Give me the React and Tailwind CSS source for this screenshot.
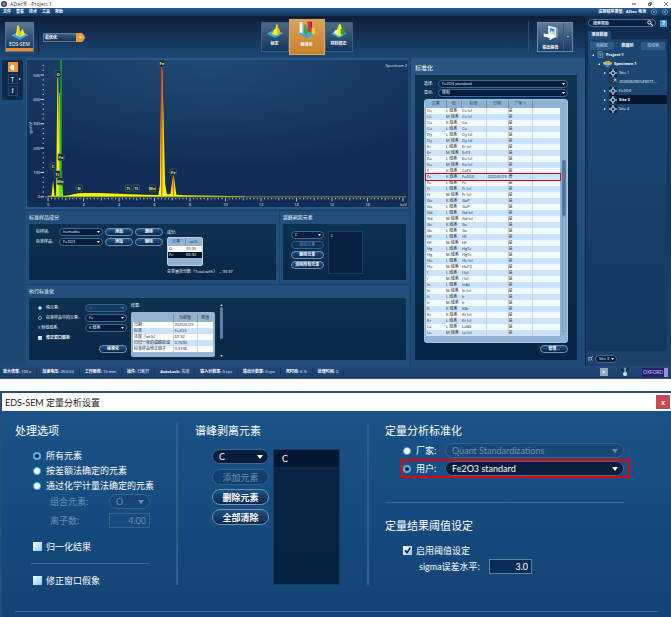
import React, { useId, useState } from 'react';
import clsx from 'clsx';

const menuItems = ['文件', '查看', '技术', '工具', '帮助'];

const standards = [
  ['Cs', 'L', 'Cs (v)'], ['Cs', 'M', 'Cs (v)'], ['Cu', 'K', 'Cu'], ['Cu', 'L', 'Cu'],
  ['Dy', 'L', 'Dy (v)'], ['Dy', 'M', 'Dy (v)'], ['Er', 'L', 'Er (v)'], ['Er', 'M', 'ErF3'],
  ['Eu', 'L', 'Eu (v)'], ['Eu', 'M', 'Eu (v)'], ['F', 'K', 'CaF2'], ['Fe', 'K', 'Fe2O3', '2020/6/29', '否'],
  ['Fe', 'L', 'Fe'], ['Fr', 'L', 'Fr (v)'], ['Fr', 'M', 'Fr (v)'], ['Ga', 'K', 'GaP'],
  ['Ga', 'L', 'GaP'], ['Gd', 'L', 'Gd (v)'], ['Gd', 'M', 'Gd (v)'], ['Ge', 'K', 'Ge'],
  ['Ge', 'L', 'Ge'], ['Hf', 'L', 'Hf'], ['Hf', 'M', 'Hf'], ['Hg', 'L', 'HgTe'],
  ['Hg', 'M', 'HgTe'], ['Ho', 'L', 'Ho (v)'], ['Ho', 'M', 'HoF3'], ['I', 'L', 'I (v)'],
  ['I', 'M', 'I (v)'], ['In', 'L', 'InAs'], ['In', 'M', 'In (v)'], ['Ir', 'L', 'Ir'],
  ['Ir', 'M', 'Ir'], ['K', 'K', 'KBr'], ['Kr', 'K', 'Kr (v)'], ['Kr', 'L', 'Kr (v)'],
  ['La', 'L', 'LaB6'], ['La', 'M', 'La (v)'],
];

const results = [
  ['日期', '2020/6/29'],
  ['标准', 'Fe2O3'],
  ['浓度（wt%）', '69.92'],
  ['已归一化的谱峰区域', '0.7690'],
  ['标准样品修正因子', '0.9336'],
];

const statusItems = [
  ['放大倍率', '100 x'],
  ['加速电压', '20.0 kV'],
  ['工作距离', '15 mm'],
  ['插件', '已断开'],
  ['AutoLock', '关闭'],
  ['输入计数率', '0 cps'],
  ['输出计数率', '0 cps'],
  ['死时间', '0 %'],
  ['处理时间', '0'],
];

const treeItems = [
  { name: 'Project 1', level: 0, icon: 'project', open: true, bold: true },
  { name: 'Specimen 1', level: 1, icon: 'specimen', open: true, bold: true },
  { name: 'Site 1', level: 2, icon: 'site' },
  { name: '202006290149077...', level: 2, icon: 'image' },
  { name: 'Fe2O3', level: 2, icon: 'site' },
  { name: 'Site 3', level: 2, icon: 'site', selected: true },
  { name: 'Site 4', level: 2, icon: 'site' },
];

const indents = ['pl-1', 'pl-[10px]', 'pl-4'];

/* ---------- shared controls ---------- */

const Select = ({ id, label, value, large, disabled, className }) => (
  <div className={clsx('relative', className)}>
    <select
      id={id}
      aria-label={label}
      defaultValue={value}
      disabled={disabled}
      className={clsx(
        'block w-full appearance-none rounded-full border py-0 outline-none',
        large ? 'h-[15px] pl-1.5 text-[9px] leading-[13px]' : 'h-2 pl-[3px] text-[4px] leading-[6px]',
        disabled
          ? 'border-[#37628b] bg-[#17436f]/60 text-[#6f90b1]'
          : 'border-[#3c6a94] bg-[#061d3b] text-white'
      )}
    >
      <option>{value}</option>
    </select>
    <svg
      viewBox="0 0 6 4"
      className={clsx(
        'pointer-events-none absolute top-1/2 -translate-y-1/2',
        large ? 'right-1.5 h-1 w-1.5' : 'right-[3px] h-[2px] w-[3px]'
      )}
    >
      <path d="M0 0h6L3 4z" fill={disabled ? '#6f90b1' : '#fff'} />
    </svg>
  </div>
);

const PillButton = ({ children, large, disabled, className }) => (
  <button
    type="button"
    disabled={disabled}
    className={clsx(
      'flex items-center justify-center rounded-full border leading-none',
      large ? 'h-4 text-[9px]' : 'h-2 text-[4px]',
      disabled
        ? 'border-[#32618c] bg-[#0f3561]/60 text-[#7391b0]'
        : 'border-[#6d93b4] bg-linear-to-b from-[#225287] to-[#08274b] font-bold text-white',
      className
    )}
  >
    {children}
  </button>
);

const Radio = ({ name, label, checked, large }) => (
  <label className={clsx('flex items-center leading-none', large ? 'h-[15px] gap-[5px] text-[9px]' : 'h-2 gap-1 text-[4px]')}>
    <input
      type="radio"
      name={name}
      defaultChecked={checked}
      className={clsx(
        'shrink-0 appearance-none rounded-full border border-[#5cb0e0] bg-[#eefaff] checked:bg-[#06203d]',
        large ? 'size-2 checked:border-2' : 'size-1'
      )}
    />
    {label}
  </label>
);

const Checkbox = ({ label, checked, large }) => (
  <label className={clsx('flex items-center gap-1 leading-none', large ? 'text-[9px]' : 'text-[4px] font-bold')}>
    <span className="relative flex shrink-0">
      <input
        type="checkbox"
        defaultChecked={checked}
        className={clsx(
          'peer appearance-none bg-linear-to-br from-white to-[#86cdf3]',
          large ? 'size-[9px]' : 'size-1'
        )}
      />
      <svg viewBox="0 0 9 9" className="pointer-events-none absolute inset-0 hidden peer-checked:block">
        <path d="M2 4.2 4 6.6 7.4 1.8" fill="none" stroke="#0b2340" strokeWidth="1.6" />
      </svg>
    </span>
    {label}
  </label>
);

/* ---------- icons ---------- */

const WorkflowIcon = ({ type, className }) => (
  <svg viewBox="0 0 32 32" className={className}>
    <path d="M1 22 15 14l16 7-15 9z" fill="#2ba3dc" />
    <path d="M1 22 15 14l16 7" fill="none" stroke="#9be3f8" />
    <path d="M5 24l16-7M10 26l16-7M9 18l15 8" stroke="#56c4ec" strokeWidth=".8" />
    {type === 'eds' && <path d="M8 21c2-3 2-18 4-19 3-1 2 12 5 13 2 0 2-6 4-5s1 6 5 10l-9 4z" fill="#f5ee21" />}
    {type === 'eds' && <path d="M13 2c3 1 2 12 5 13l-1 8-4-3z" fill="#c5c31b" />}
    {type === 'define' && <path d="M9 22c4-3 4-9 7-10 2-2 2-10 4-10s1 9 4 9l3 10-8 4z" fill="#f5ee21" />}
    {type === 'define' && <path d="M20 2c2 2 1 9 4 9l3 10-6 2z" fill="#c8be18" />}
    {type === 'standard' && (
      <g>
        <path d="M3 2h5v21l-5-3z" fill="#f4f7f8" />
        <path d="M8 3l2-1v20l-2 1z" fill="#9fb4bf" />
        <path d="M11 7c3-4 4 3 7 14l-3 4-5-4z" fill="#39a849" />
        <path d="M17 1h6v20l-6-3z" fill="#d92c3c" />
        <path d="M23 2l2-1v19l-2 1z" fill="#94202c" />
        <path d="M24 12h6v10l-3 2-3-2z" fill="#f0d625" />
      </g>
    )}
    {type === 'correct' && (
      <g>
        <path d="M6 21c0-5 3-8 5-7 2-2 4-11 7-12 3 0 2 7 4 8l1 14-6 3z" fill="#f5ee21" />
        <path d="M19 13c4-6 8-4 9 1l-1 8-7 2z" fill="#2a9b36" />
        <path d="M6 20c2-7 5-8 8-2v5z" fill="#eef6f2" />
      </g>
    )}
  </svg>
);

const ReportIcon = ({ className }) => (
  <svg viewBox="0 0 32 32" className={className}>
    <path d="M11 3l14 3v18l-14-3z" fill="#e8f2f8" />
    <path d="M14 7l8 2v11l-8-2z" fill="#2f93c4" />
    <path d="M15 14l2-3 2 3 3-2v7l-7-2z" fill="#bfe9c8" />
    <path d="M25 7l3-1v18l-3 1z" fill="#809cb0" />
    <path d="M3 17l10 1 3-3 9 8-12 6 1-4-11-3z" fill="#f6fbff" />
  </svg>
);

const TreeIcon = ({ type }) => {
  if (type === 'project') {
    return (
      <svg viewBox="0 0 12 12" className="size-[7px]">
        <path d="M2 1h6l2 2v8H2z" fill="none" stroke="#9db9d0" />
        <path d="M4 4h4M4 6h4M4 8h3" stroke="#9db9d0" />
      </svg>
    );
  }
  if (type === 'specimen') {
    return (
      <svg viewBox="0 0 14 12" className="h-2 w-[9px]">
        <ellipse cx="7" cy="5" rx="7" ry="3" fill="#9fc6df" />
        <path d="M5 7h4v4H5z" fill="#5f8fb0" />
        <path d="M4 2l5-1 3 2v3l-6 1-2-2z" fill="#f09a2a" />
      </svg>
    );
  }
  if (type === 'image') {
    return (
      <svg viewBox="0 0 14 12" className="h-[7px] w-2">
        <path d="M0 1h12v10H0z" fill="#26394d" />
        <path d="M8 2h4v4M12 2L8 6" fill="none" stroke="#e3edf5" strokeWidth="1.4" />
      </svg>
    );
  }
  return (
    <svg viewBox="0 0 14 14" className="size-2">
      <path d="M0 0h14v14H0z" fill="#0f2b4b" />
      <circle cx="7" cy="7" r="3.4" fill="none" stroke="#e7f1fa" strokeWidth="1.6" />
      <path d="M7 0v3M7 11v3M0 7h3M11 7h3" stroke="#e7f1fa" strokeWidth="1.8" />
    </svg>
  );
};

/* ---------- spectrum chart ---------- */

const kevX = (kev) => 21 + kev * 17.7;
const cpsY = (cps) => 136.5 - cps * 0.243;

const peaks = [
  { el: 'C', x: 26, y: 106 },
  { el: 'Ti', x: 30, y: 114 },
  { el: 'O', x: 31, y: 14 },
  { el: 'Fe', x: 34, y: 97 },
  { el: 'Mn', x: 33, y: 121 },
  { el: 'Si', x: 52, y: 128 },
  { el: 'Ti', x: 101, y: 128 },
  { el: 'Ti', x: 109, y: 128 },
  { el: 'Mn', x: 125, y: 128 },
  { el: 'Fe', x: 134.5, y: 3.5 },
  { el: 'Fe', x: 146, y: 112 },
];

const Spectrum = () => {
  const yTicks = Array.from({ length: 28 }, (_, i) => i * 20);
  const xTicks = Array.from({ length: 101 }, (_, i) => i * 0.2);

  return (
    <svg viewBox="0 0 380 147" className="block w-full" role="img" aria-label="Spectrum 2">
      <defs>
        <radialGradient id="plotBg" cx=".48" cy="0" r=".75">
          <stop offset="0" stopColor="#1f4b74" />
          <stop offset="1" stopColor="#122d55" />
        </radialGradient>
        <linearGradient id="peak" x1="0" y1="0" x2="0" y2="1">
          <stop offset="0" stopColor="#d8341a" />
          <stop offset=".5" stopColor="#f0b010" />
          <stop offset="1" stopColor="#ffff00" />
        </linearGradient>
      </defs>
      <rect width="380" height="147" fill="url(#plotBg)" />

      {yTicks.map((v) => (
        <line key={v} x1={v % 100 ? 15.5 : 13.5} x2="17" y1={cpsY(v)} y2={cpsY(v)} stroke="#d6e2ee" strokeWidth={v % 100 ? 0.8 : 1} />
      ))}
      {xTicks.map((v, i) => (
        <line key={i} x1={kevX(v)} x2={kevX(v)} y1="137.5" y2={i % 10 === 0 ? 141 : i % 5 === 0 ? 140 : 139} stroke="#d6e2ee" strokeWidth=".8" />
      ))}
      <g fill="#e8eff6" fontSize="4">
        {[0, 100, 200, 300, 400, 500].map((v) => (
          <text key={v} x="13" y={cpsY(v) + 1.5} textAnchor="end">{v}</text>
        ))}
        {[0, 2, 4, 6, 8, 10, 12, 14, 16, 18].map((v) => (
          <text key={v} x={kevX(v)} y="145.5" textAnchor="middle">{v}</text>
        ))}
        <text x="379" y="145.5" textAnchor="end">keV</text>
        <text transform="translate(5 68) rotate(-90)" textAnchor="middle">cps/eV</text>
        <text x="379" y="6.5" textAnchor="end">Spectrum 2</text>
      </g>

      <path
        d="M21 136.500V135.500h3.500L26 120l1.500 15.500H29L30.300 18h.8l.9 75 1-60 1.500 90 1.500 12.500c6 0 8-1.500 16-2.500 20-1 45 1 65 1.500l14 .2 2-12L134 9h1l2.800 115 1.700 10h3.500l2.500-18h1l2.500 18.500 8 .5 60 .8v.7z"
        fill="#f5f500"
      />
      <path d="M32 33h1.200l.5 103h-2z" fill="#a4bf1e" />
      <rect x="33.200" y="0" width="1.600" height="136" fill="#0ba52c" />
      <path d="M32 125h3.500v11H32z" fill="#52ee16" />
      <path d="M133.800 9h1.300l1.400 127h-4z" fill="url(#peak)" />
      <line x1="134.500" x2="134.500" y1="7" y2="136" stroke="#e2391b" strokeWidth=".9" />
      <path d="M146 116l2 20h-4z" fill="url(#peak)" />
      <line x1="146" x2="146" y1="115" y2="136" stroke="#d9442a" strokeWidth=".8" />
      <line x1="18" x2="378" y1="136.500" y2="136.500" stroke="#a8ac2c" strokeWidth=".7" />

      {peaks.map((peak, i) => (
        <g key={i}>
          <rect x={peak.x - 3} y={peak.y - 3.5} width="6" height="7" rx="1" fill="#0f2a4b" stroke="#53708f" strokeWidth=".5" />
          <text x={peak.x} y={peak.y + 1.5} textAnchor="middle" fontSize="4" fontWeight="bold" fill="#f1f11c">{peak.el}</text>
        </g>
      ))}
    </svg>
  );
};

/* ---------- panels ---------- */

const insetBox = 'bg-linear-to-b from-[#0d3250] to-[#092747]';

const Panel = ({ title, children, className }) => (
  <section className={clsx('flex flex-col border-t border-[#17406a] bg-[#214f7a] px-[3px]', className)}>
    <h2 className="h-[13px] text-[5px] leading-[13px]">{title}</h2>
    <div className={clsx('flex flex-1', insetBox)}>{children}</div>
  </section>
);

const SampleComposition = () => {
  const id = useId();
  return (
    <Panel title="标准样品成分" className="min-w-0 flex-2 pb-1">
      <div className="flex gap-1 pt-1 pl-[7px]">
        <div className="flex flex-col gap-[2px]">
          {[['标样块:', 'hematite'], ['标准样品:', 'Fe2O3']].map(([label, value]) => (
            <div key={label} className="flex items-center gap-[2px]">
              <label htmlFor={id + value} className="w-[21px] text-[4px] leading-none">{label}</label>
              <Select id={id + value} value={value} className="w-11" />
              <PillButton className="w-7">添加</PillButton>
              <PillButton className="w-7">删除</PillButton>
            </div>
          ))}
        </div>
        <div className="flex flex-col text-[4px]">
          <span className="h-[9px] leading-[9px]">成分:</span>
          <div className="h-[29px] w-9 rounded-[2px] border border-[#b5cee2] bg-[#94b5d2]">
            <table className="w-full leading-[6px] text-[#222]">
              <thead>
                <tr className="h-2 text-[#234]">
                  <th className="w-1/2 border-r border-[#6f90ad] p-0 font-normal">元素</th>
                  <th className="p-0 font-normal">wt%</th>
                </tr>
              </thead>
              <tbody>
                <tr className="bg-white">
                  <td className="p-0 pl-px">O</td>
                  <td className="p-0 pl-px">30.05</td>
                </tr>
                <tr className="bg-[#06152a] text-white">
                  <td className="p-0 pl-px">Fe</td>
                  <td className="p-0 pl-px">69.92</td>
                </tr>
              </tbody>
            </table>
          </div>
          <span className="mt-1 whitespace-nowrap leading-none">总重量百分数（Total wt%）&nbsp; = 99.97</span>
        </div>
      </div>
    </Panel>
  );
};

const PeakStripping = () => (
  <Panel title="谱峰剥离元素" className="flex-1 border-l pb-1">
    <div className="flex gap-1 pt-[7px] pb-1.5 pl-2">
      <div className="flex w-[33px] flex-col gap-[2px]">
        <Select label="元素" value="C" />
        <PillButton disabled>添加元素</PillButton>
        <PillButton>删除元素</PillButton>
        <PillButton>清除所有元素</PillButton>
      </div>
      <ul className="w-[35px] border border-[#173f62] bg-[#07203d] text-[4px] leading-none">
        <li className="p-[2px]">C</li>
      </ul>
    </div>
  </Panel>
);

const RunStandardization = () => {
  const id = useId();
  return (
    <Panel title="执行标准化" className="flex-1 pb-1.5">
      <div className="flex gap-1 pt-1.5 pb-[3px] pl-[9px]">
        <div className="flex w-[89px] flex-col gap-[2px]">
          <div className="flex items-center justify-between">
            <Radio name="run" label="纯元素:" />
            <Select label="纯元素" value="Li" disabled className="w-[42px]" />
          </div>
          <div className="flex items-center justify-between">
            <Radio name="run" label="标准样品中的元素:" checked />
            <Select label="标准样品中的元素" value="Fe" className="w-[42px]" />
          </div>
          <div className="flex items-center justify-between">
            <label htmlFor={id} className="text-[4px] leading-none">X 射线线系:</label>
            <Select id={id} value="K 线系" className="w-[42px]" />
          </div>
          <div className="flex h-2 items-center">
            <Checkbox label="修正窗口假象" />
          </div>
          <PillButton className="mt-px w-7 self-end">标准化</PillButton>
        </div>
        <div className="flex flex-col text-[4px]">
          <span className="h-2 leading-none">结果:</span>
          <div className="flex-1 rounded-[2px] border-2 border-[#94b5d2] bg-[#94b5d2]">
            <table className="w-20 table-fixed leading-[6px] text-[#222]">
              <thead>
                <tr className="h-2">
                  <th className="w-10 border-r border-[#6f90ad] p-0" />
                  <th className="w-6 border-r border-[#6f90ad] p-0 font-normal">当前值</th>
                  <th className="p-0 font-normal">新值</th>
                </tr>
              </thead>
              <tbody>
                {results.map(([name, value]) => (
                  <tr key={name} className="bg-white whitespace-nowrap even:bg-[#cce4fb]">
                    <td className="border-r border-[#c4d6e6] p-0 pl-px">{name}</td>
                    <td className="border-r border-[#c4d6e6] p-0 pl-px">{value}</td>
                    <td className="p-0" />
                  </tr>
                ))}
              </tbody>
            </table>
          </div>
        </div>
        <div className="flex w-1 flex-col items-center">
          <svg viewBox="0 0 4 3" className="mb-px h-[2px] w-[3px]"><path d="M0 3h4L2 0z" fill="#c5d8ea" /></svg>
          <div className="h-8 w-[3px] rounded-full bg-[#5d7fa8]" />
          <svg viewBox="0 0 4 3" className="mt-auto h-[2px] w-[3px]"><path d="M0 0h4L2 3z" fill="#c5d8ea" /></svg>
        </div>
      </div>
    </Panel>
  );
};

const StandardsPanel = () => {
  const id = useId();
  return (
    <aside className="flex w-[175px] shrink-0 flex-col border-l border-[#17406a] bg-linear-to-b from-[#2a5680] to-[#1d4a76] px-1 pb-1.5">
      <h2 className="h-[17px] text-[6px] leading-5">标准化</h2>
      <div className="mr-1 flex flex-1 flex-col bg-linear-to-b from-[#0e3352] to-[#072546] px-[9px] pt-[5px] pb-[7px]">
        {[['选择:', 'Fe2O3 standard'], ['显示:', '所有']].map(([label, value]) => (
          <div key={label} className="mb-px flex items-center">
            <label htmlFor={id + label} className="w-[14px] text-[4px] leading-none">{label}</label>
            <Select id={id + label} value={value} className="flex-1" />
          </div>
        ))}
        <div className="mt-px flex rounded-[3px] border border-[#a9c6de] bg-[#8fb3d2] pb-1.5 pl-px">
          <table className="flex-1 text-[4px] leading-[6px] text-[#222]">
            <thead>
              <tr className="h-2 text-[#2b4156]">
                {['元素', '线', '标准', '日期', '厂家 ?', ''].map((head, i) => (
                  <th key={i} className="border-r border-[#6f90ad] p-0 font-normal last:border-r-0">{head}</th>
                ))}
              </tr>
            </thead>
            <tbody>
              {standards.map(([el, line, standard, date, factory], i) => (
                <tr
                  key={i}
                  className={clsx(
                    'h-1.5 bg-[#f4f9fe] even:bg-[#cce4fb]',
                    date && 'relative z-10 outline-1 outline-red-600'
                  )}
                >
                  <td className="w-5 p-0 pl-px">{el}</td>
                  <td className="w-[15px] p-0 whitespace-nowrap">{line} 线系</td>
                  <td className="w-[25px] border-r border-[#c4d6e6] p-0 pl-px">{standard}</td>
                  <td className="w-[22px] border-r border-[#c4d6e6] p-0 pl-px">{date}</td>
                  <td className="w-6 border-r border-[#c4d6e6] p-0">{factory || '是'}</td>
                  <td className="p-0" />
                </tr>
              ))}
            </tbody>
          </table>
          <div className="flex w-[7px] flex-col items-center pt-[60px] pb-1">
            <div className="h-14 w-1 rounded-full bg-[#54789b]" />
            <div className="w-1 flex-1 border border-[#7ea3c2]" />
          </div>
        </div>
        <PillButton className="mt-[2px] w-7 self-end">管理...</PillButton>
      </div>
    </aside>
  );
};

const Toolbar = () => (
  <div className="flex h-[42px] items-center bg-linear-to-b from-[#0d1f38] to-[#1c4875] px-[5px] text-[4px]">
    <button type="button" className="flex h-[30px] w-[29px] flex-col items-center border border-[#53779a] bg-linear-to-b from-[#5b7892] to-[#123560]">
      <WorkflowIcon type="eds" className="mt-px size-[18px]" />
      <span className="h-[7px] text-[5px] leading-[7px]">EDS-SEM</span>
      <span className="mt-auto h-[3px] w-full bg-[#f08b2c]" />
    </button>
    <div className="mx-1 h-9 w-px bg-[#0e2a4a]" />
    <div className="relative w-[42px]">
      <select aria-label="模式" className="block h-[9px] w-full appearance-none rounded-r-full border border-[#59809f] bg-linear-to-b from-[#41637f] to-[#132f50] py-0 pl-px text-[4px] leading-[7px] font-bold">
        <option>最优化</option>
      </select>
      <svg viewBox="0 0 9 9" className="pointer-events-none absolute top-0 right-0 size-[9px]">
        <path d="M0 0h6l3 4.500L6 9H0z" fill="#f09a38" />
        <path d="M3 3.500h3l-1.500 2z" fill="#fff" />
      </svg>
    </div>
    <nav className="ml-auto flex items-center">
      <button type="button" className="flex h-[30px] w-7 flex-col items-center border border-[#3b5f82] bg-linear-to-b from-[#4e6b84] to-[#12365f]">
        <WorkflowIcon type="define" className="size-4" />
        <span className="mt-[3px] leading-none font-bold">标定</span>
      </button>
      <button type="button" className="flex h-9 w-9 flex-col items-center border border-[#e8a75a] bg-linear-to-b from-[#dba25a] to-[#c5822a]">
        <WorkflowIcon type="standard" className="mt-px size-[18px]" />
        <span className="mt-1 leading-none font-bold">标准化</span>
      </button>
      <button type="button" className="flex h-[30px] w-7 flex-col items-center border border-[#3b5f82] bg-linear-to-b from-[#4e6b84] to-[#12365f]">
        <WorkflowIcon type="correct" className="size-4" />
        <span className="mt-[3px] leading-none font-bold">材料修正</span>
      </button>
    </nav>
    <div className="mr-2 ml-auto h-8 w-px bg-[#2a517a]" />
    <button type="button" className="mr-[7px] flex h-[30px] w-9 border border-[#6c8ba7] bg-linear-to-b from-[#5f7c94] to-[#153a65]">
      <span className="flex flex-1 flex-col items-center border-r border-[#365a7e]">
        <ReportIcon className="mt-px size-[18px]" />
        <span className="mt-1 leading-none font-bold">输出报告</span>
      </span>
      <span className="flex w-2 items-center justify-center self-stretch">
        <svg viewBox="0 0 6 4" className="w-[2px]"><path d="M0 0h6L3 4z" fill="#fff" /></svg>
      </span>
    </button>
  </div>
);

const Sidebar = () => {
  const [tab, setTab] = useState('数据树');
  return (
    <aside className="flex w-[86px] shrink-0 flex-col border-l border-[#0c2746] bg-linear-to-b from-[#102c50] to-[#1d426a] pr-1 pl-[2px] text-[4px]">
      <div className="mt-[3px] flex items-center gap-1">
        <div className="relative w-[71px]">
          <input
            type="search"
            aria-label="搜索帮助"
            placeholder="搜索帮助"
            className="block h-2 w-full appearance-none rounded-full border border-[#4a7096] bg-[#07203d] pl-1 font-bold text-white placeholder:text-[#d5e2ee]"
          />
          <svg viewBox="0 0 10 10" className="pointer-events-none absolute top-px right-[3px] size-1.5">
            <circle cx="4" cy="4" r="2.800" fill="none" stroke="#fff" strokeWidth="1.500" />
            <path d="M6 6l3.500 3.500" stroke="#fff" strokeWidth="1.800" />
          </svg>
        </div>
        <button type="button" className="h-[7px] w-[7px] rounded-[1px] bg-[#4f9be0] text-[6px] leading-[7px] font-bold">?</button>
      </div>
      <h2 className="mt-1 h-2 w-[23px] bg-[#1f4a78] text-center leading-2 font-bold">项目数据</h2>
      <div className="flex flex-1 flex-col bg-[#1b436e] pt-[3px]">
        <div role="tablist" className="flex gap-[2px] px-[2px]">
          {['当前区', '数据树', '自动化'].map((name) => (
            <button
              key={name}
              type="button"
              role="tab"
              aria-selected={tab === name}
              onClick={() => setTab(name)}
              className={clsx('h-2 flex-1 leading-none', tab === name ? 'bg-[#1b4873] font-bold' : 'bg-[#2f5a86] text-[#d3e1ee]')}
            >
              {name}
            </button>
          ))}
        </div>
        <ul className="flex-1 bg-linear-to-b from-[#1b4873] to-[#14375f]">
          {treeItems.map((item) => (
            <li key={item.name} className={clsx('flex h-[9px] items-center gap-[3px] whitespace-nowrap', indents[item.level])}>
              <svg viewBox="0 0 4 4" className={clsx('size-[2px] shrink-0', item.icon === 'image' && 'invisible')}>
                <path d={item.open ? 'M4 0v4H0z' : 'M0 0l4 2-4 2z'} fill="#fff" />
              </svg>
              <span className={clsx('flex h-full flex-1 items-center gap-[2px]', item.selected && 'bg-[#06172e]')}>
                <TreeIcon type={item.icon} />
                <span className={clsx('leading-none', (item.bold || item.selected) && 'font-bold')}>{item.name}</span>
              </span>
            </li>
          ))}
        </ul>
      </div>
      <div className="flex h-[15px] items-center gap-[2px]">
        <svg viewBox="0 0 10 10" className="size-[5px]">
          <circle cx="4.500" cy="5.500" r="3" fill="none" stroke="#b9cbdc" strokeWidth="1.500" />
          <path d="M6 4l4-4M0 10l2-2M0 3l2 1M8 8l1 1" stroke="#b9cbdc" strokeWidth="1.200" />
        </svg>
        <Select label="当前位置" value="Site 3" className="w-[22px]" />
      </div>
    </aside>
  );
};

const StatusBar = () => (
  <footer className="flex h-[13px] items-center border-b border-[#3a4f68] bg-linear-to-b from-[#24497a] to-[#17406b] px-[3px] text-[4px] leading-none">
    {statusItems.map(([name, value]) => (
      <span key={name} className="mr-[5px] border-r border-[#15365e] py-[2px] pr-[5px] whitespace-nowrap">
        <b>{name}:</b> {value}
      </span>
    ))}
    <div className="ml-auto flex items-center gap-3">
      <svg viewBox="0 0 10 10" className="size-2">
        <path d="M0 0h10v10H0z" fill="#91a9c0" />
        <path d="M3.500 3l3.500 2-3.500 2z" fill="#fff" />
      </svg>
      <svg viewBox="0 0 12 12" className="size-[10px]">
        <path d="M1 2l4 3M11 1L7 5" stroke="#102e50" strokeWidth="2" />
        <path d="M5.500 1h1v6h-1z" fill="#e6eef5" />
        <circle cx="6" cy="8.500" r="2.500" fill="#d5e2ec" />
      </svg>
      <div className="flex h-[9px] items-center border-r-4 border-[#a68bd0] bg-[#241f72] px-px text-[5px] leading-none text-[#d4d2ef]">OXFORD</div>
    </div>
  </footer>
);

const AztecWindow = () => (
  <section className="flex flex-col bg-[#1d4a75] text-white">
    <header>
      <div className="flex h-2 items-center bg-white pr-[3px] pl-px text-[5px] leading-none text-[#333]">
        <svg viewBox="0 0 10 10" className="mr-[3px] size-1.5">
          <circle cx="5" cy="5" r="5" fill="#223a7c" />
          <circle cx="5" cy="5" r="2" fill="none" stroke="#fff" />
        </svg>
        <h1>AZtec® - Project 1</h1>
        <div className="ml-auto flex gap-3">
          <button type="button" aria-label="最小化"><svg viewBox="0 0 8 8" className="size-1"><path d="M0 4h8" stroke="#444" strokeWidth="2" /></svg></button>
          <button type="button" aria-label="还原"><svg viewBox="0 0 8 8" className="size-1"><path d="M1 3h4v4H1zM3 3V1h4v4H5" fill="none" stroke="#444" strokeWidth="1.500" /></svg></button>
          <button type="button" aria-label="关闭"><svg viewBox="0 0 8 8" className="size-1"><path d="M0 0l8 8M8 0L0 8" stroke="#444" strokeWidth="1.500" /></svg></button>
        </div>
      </div>
      <div className="flex h-2 items-center gap-[5px] bg-linear-to-b from-[#22599a] to-[#153457] px-[3px] text-[4px] leading-none font-bold">
        {menuItems.map((item) => (
          <button key={item} type="button">{item}</button>
        ))}
        <span className="ml-auto">应用程序类型:&nbsp; AZtec 电池</span>
        {[0, 1].map((i) => (
          <svg key={i} viewBox="0 0 10 10" className="size-1.5">
            <circle cx="5" cy="5" r="4.300" fill="none" stroke="#8fb0d0" />
            <path d="M3.500 4h3L5 6.500z" fill="#fff" />
          </svg>
        ))}
      </div>
    </header>
    <div className="flex">
      <main className="flex min-w-0 flex-1 flex-col">
        <Toolbar />
        <div className="flex flex-1">
          <div className="w-[26px] shrink-0 pt-[2px] pl-[2px]">
            <div className="flex h-10 w-[21px] flex-col items-center gap-[2px] rounded-[2px] bg-[#0d2a4d] pt-[2px]">
              <button type="button" aria-label="平移" className="flex size-[10px] items-center justify-center bg-[#ef9436]">
                <svg viewBox="0 0 10 10" className="size-[7px]">
                  <path d="M1 4l1-1 1 1V1h1v2-2h1v2-2h1v2-1h1.500v4L7 9H4z" fill="#fff" />
                </svg>
              </button>
              <button type="button" className="relative size-[10px] border border-[#24466d] text-[7px] leading-none">
                T
                <svg viewBox="0 0 4 4" className="absolute top-[3px] -right-1 size-[2px]">
                  <path d="M0 0l4 2-4 2z" fill="#fff" />
                </svg>
              </button>
              <button type="button" className="size-[10px] border border-[#24466d] font-serif text-[8px] leading-none italic">i</button>
            </div>
          </div>
          <div className="flex min-w-0 flex-1 flex-col pr-px">
            <div className="border-y-2 border-l border-[#2b5783] pr-px">
              <Spectrum />
            </div>
            <div className="mt-px flex h-[74px]">
              <SampleComposition />
              <PeakStripping />
            </div>
            <RunStandardization />
          </div>
          <StandardsPanel />
        </div>
      </main>
      <Sidebar />
    </div>
    <StatusBar />
  </section>
);

/* ---------- quant settings dialog ---------- */

const QuantSettings = () => {
  const id = useId();
  const heading = 'text-[11px] leading-4';
  return (
    <section className="mt-3 flex flex-1 flex-col border-t-2 border-l-2 border-[#234f7a] bg-linear-to-b from-[#1b5489] to-[#134374] font-['Lato','Noto_Sans_CJK_SC',sans-serif] text-[9px] text-white">
      <header className="flex h-[18px] items-center justify-between bg-white pr-px pl-[3px]">
        <h1 className="text-[9px] leading-none text-[#222]">EDS-SEM 定量分析设置</h1>
        <button type="button" aria-label="关闭" className="flex h-[14px] w-[14px] items-center justify-center bg-[#c94b52] text-[7px] leading-none font-bold">x</button>
      </header>

      <div className="flex-1 px-[13px] pt-3">
        <div className="grid grid-cols-[163px_191px_1fr] border-b border-[#3b699a] pb-[26px]">
          <div className="border-r-2 border-[#315f8d]">
            <h2 className={heading}>处理选项</h2>
            <div className="pt-[9px] pl-[18px]">
              <Radio large name="elements" label="所有元素" checked />
              <Radio large name="elements" label="按差额法确定的元素" />
              <Radio large name="elements" label="通过化学计量法确定的元素" />
            </div>
            <div className="mt-px mr-[26px] flex flex-col gap-1 pl-[35px] text-[#6f90b1]">
              <div className="flex items-center justify-between">
                <label htmlFor={id + 'combined'}>组合元素:</label>
                <Select large id={id + 'combined'} value="O" disabled className="w-[41px]" />
              </div>
              <div className="flex items-center justify-between">
                <label htmlFor={id + 'ions'}>离子数:</label>
                <input
                  id={id + 'ions'}
                  defaultValue="4.00"
                  disabled
                  className="h-[15px] w-[41px] border border-[#37628b] pr-[3px] text-right text-[9px]"
                />
              </div>
            </div>
            <div className="mr-[26px] ml-4 border-b border-[#3b699a] pt-3.5 pb-3 pl-[2px]">
              <Checkbox large label="归一化结果" />
            </div>
            <div className="pt-3 pl-[18px]">
              <Checkbox large label="修正窗口假象" />
            </div>
          </div>

          <div className="flex flex-col border-r-2 border-[#315f8d] pl-[17px]">
            <h2 className={heading}>谱峰剥离元素</h2>
            <div className="mt-2.5 flex flex-1 gap-1 pl-[17px]">
              <div className="flex w-[57px] flex-col gap-1">
                <Select large label="元素" value="C" className="mb-px" />
                <PillButton large disabled>添加元素</PillButton>
                <PillButton large>删除元素</PillButton>
                <PillButton large>全部清除</PillButton>
              </div>
              <ul className="w-[67px] border border-[#123a62] bg-linear-to-b from-[#0a2442] to-[#072140]">
                <li className="bg-[#041730] pl-2 leading-[17px]">C</li>
              </ul>
            </div>
          </div>

          <div className="pl-4">
            <h2 className={heading}>定量分析标准化</h2>
            <div className="mt-1 flex items-center gap-1 pl-[18px]">
              <div className="w-[38px]"><Radio large name="standards" label="厂家:" /></div>
              <Select large label="厂家标准" value="Quant Standardizations" disabled className="mr-[34px] flex-1" />
            </div>
            <div className="mt-px mr-7 ml-4 flex items-center gap-1 border-2 border-red-600">
              <div className="w-[38px]"><Radio large name="standards" label="用户:" checked /></div>
              <Select large label="用户标准" value="Fe2O3 standard" className="mr-1 flex-1" />
            </div>
            <div className="mt-6 mr-[34px] border-t border-[#3b699a]" />
            <h2 className={clsx(heading, 'mt-[15px]')}>定量结果阈值设定</h2>
            <div className="mt-3 flex flex-col gap-1 pl-[18px]">
              <Checkbox large label="启用阈值设定" checked />
              <div className="flex items-center gap-2 pl-4">
                <label htmlFor={id + 'sigma'} className="w-[62px] whitespace-nowrap">sigma误差水平:</label>
                <input
                  id={id + 'sigma'}
                  defaultValue="3.0"
                  className="h-[15px] w-[43px] border border-[#5d83a8] bg-[#0b2c54] pr-[3px] text-right text-[9px]"
                />
              </div>
            </div>
          </div>
        </div>
      </div>
    </section>
  );
};

export default function App() {
  return (
    <div className="flex min-h-screen flex-col bg-white font-['Open_Sans','Noto_Sans_CJK_SC',sans-serif]">
      <AztecWindow />
      <QuantSettings />
    </div>
  );
}
